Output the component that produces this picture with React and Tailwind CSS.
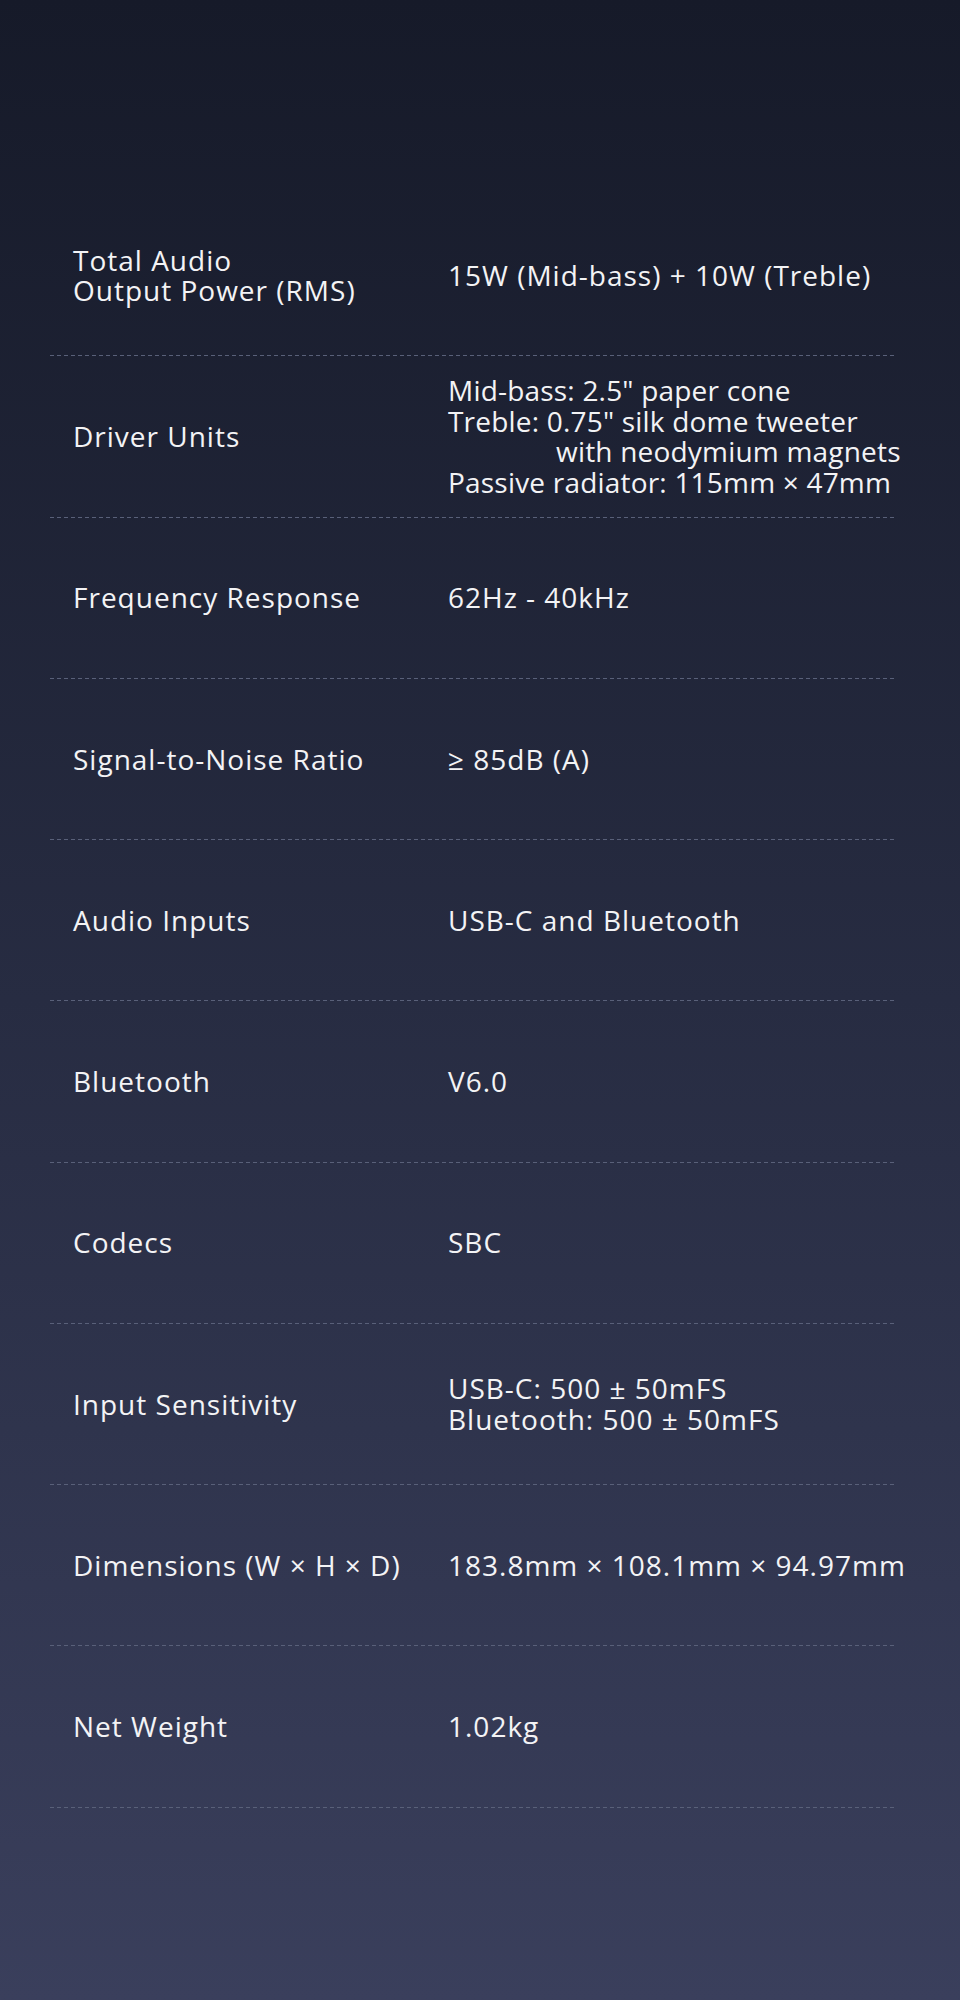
import React from "react";

const rows = [
  { label: ["Total Audio", "Output Power (RMS)"], value: ["15W (Mid-bass) + 10W (Treble)"] },
  {
    tight: true,
    label: ["Driver Units"],
    value: [
      "Mid-bass: 2.5\" paper cone",
      "Treble: 0.75\" silk dome tweeter",
      { indent: true, text: "with neodymium magnets" },
      "Passive radiator: 115mm × 47mm",
    ],
  },
  { label: ["Frequency Response"], value: ["62Hz - 40kHz"] },
  { label: ["Signal-to-Noise Ratio"], value: ["≥ 85dB (A)"] },
  { label: ["Audio Inputs"], value: ["USB-C and Bluetooth"] },
  { label: ["Bluetooth"], value: ["V6.0"] },
  { label: ["Codecs"], value: ["SBC"] },
  { label: ["Input Sensitivity"], value: ["USB-C: 500 ± 50mFS", "Bluetooth: 500 ± 50mFS"] },
  { label: ["Dimensions (W × H × D)"], value: ["183.8mm × 108.1mm × 94.97mm"] },
  { label: ["Net Weight"], value: ["1.02kg"] },
];

export default function App() {
  return (
    <div
      className="min-h-[2000px] w-[960px] bg-linear-to-b from-[#161a29] via-[#272c42] to-[#3a3f5c] text-[#f3f3f5] pt-[195px]"
      style={{ fontFamily: '"Open Sans", "Noto Sans", sans-serif' }}
    >
      <div className="ml-[50px] w-[847px] flex flex-col">
        {rows.map((r, i) => (
          <div key={i} className="flex flex-col">
            <div className="h-[160.25px] flex items-center text-[28px] leading-[30.5px] font-medium tracking-[1px]">
              <div className="w-[398px] shrink-0 pl-[23px] flex flex-col whitespace-nowrap">
                {r.label.map((l, j) => (
                  <span key={j}>{l}</span>
                ))}
              </div>
              <div className={r.tight ? "flex flex-col whitespace-nowrap tracking-[0.2px]" : "flex flex-col whitespace-nowrap"}>
                {r.value.map((v, j) =>
                  typeof v === "string" ? (
                    <span key={j}>{v}</span>
                  ) : (
                    <span key={j} className="pl-[108px]">{v.text}</span>
                  )
                )}
              </div>
            </div>
            <div className="h-px bg-[repeating-linear-gradient(to_right,#596079_0px,#596079_4px,transparent_4px,transparent_7px)]" />
          </div>
        ))}
      </div>
    </div>
  );
}
